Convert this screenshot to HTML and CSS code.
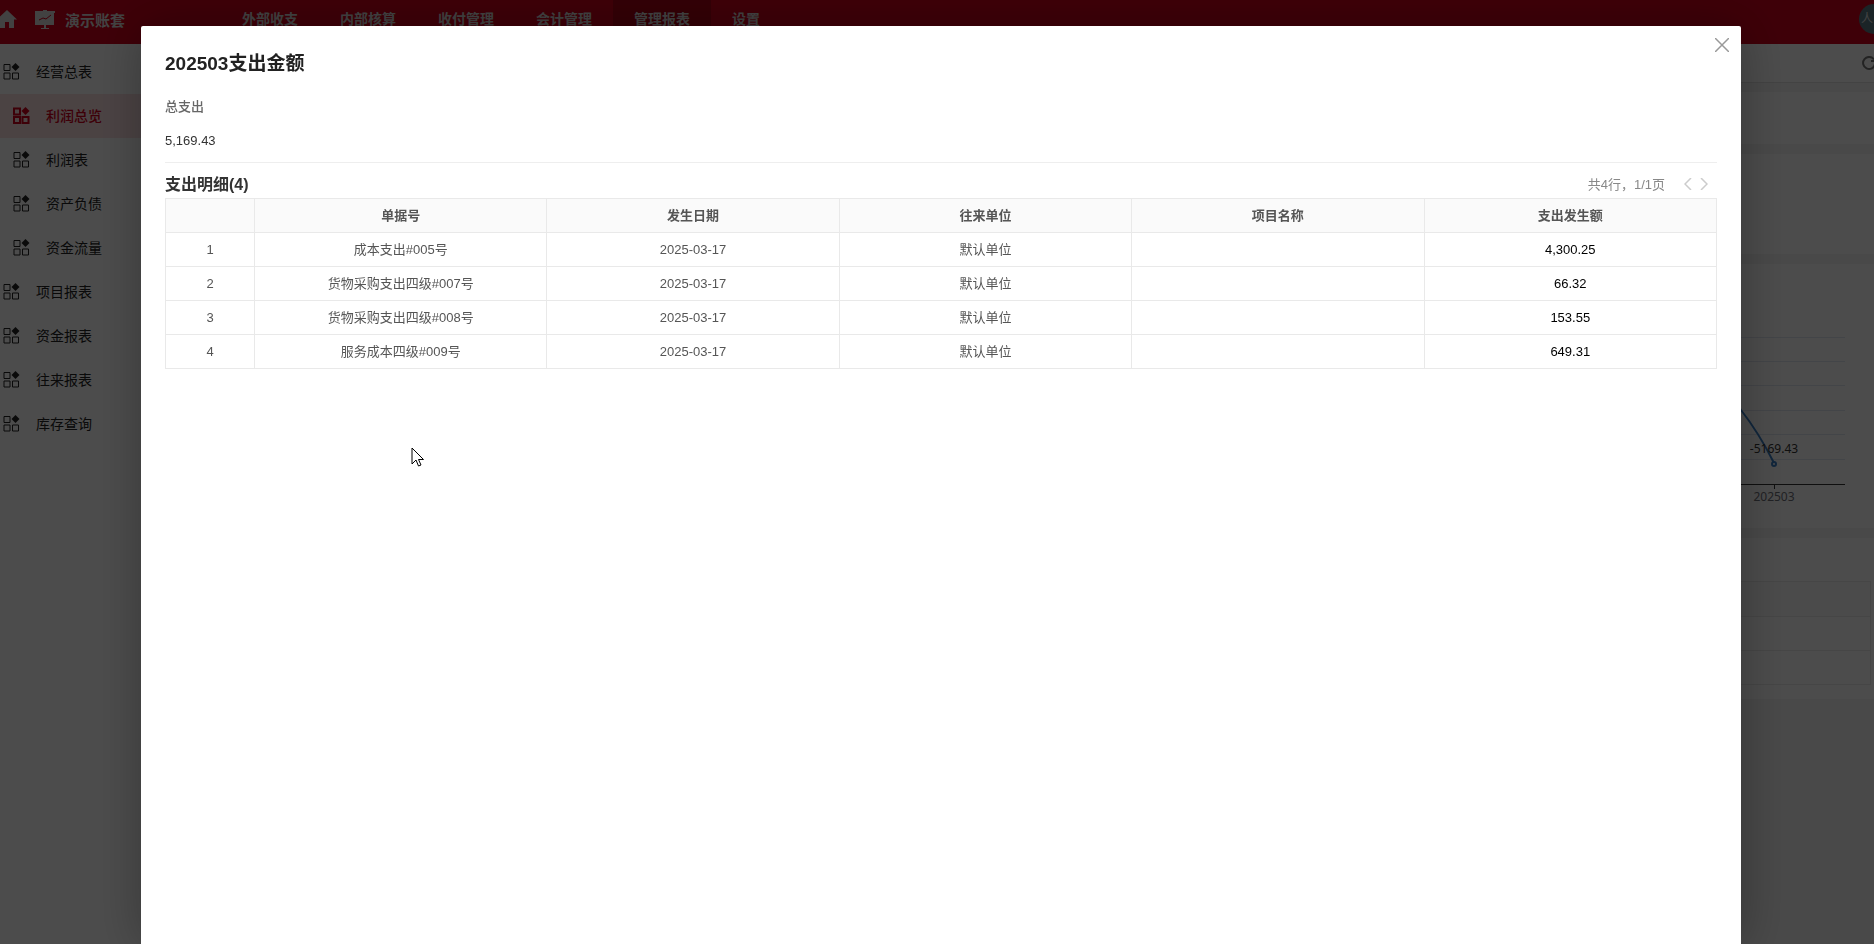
FILE: index.html
```html
<!DOCTYPE html>
<html lang="zh-CN">
<head>
<meta charset="UTF-8">
<title>利润总览</title>
<meta name="viewport" content="width=device-width, initial-scale=1">
<link rel="stylesheet" href="styles.css">
</head>
<body>

<svg class="defs" aria-hidden="true">
  <symbol id="icon-grid" viewBox="0 0 17 17">
    <path d="M1 1.500h6v6h-6zM1 10h6v6h-6zM9.500 10h6v6h-6z" fill="none" stroke="currentColor"/>
    <path d="M12.500 0l4 4-4 4-4-4z" fill="currentColor"/>
  </symbol>
</svg>

<header class="topbar">
  <a class="home" href="#" aria-label="首页">
    <svg width="17" height="18" viewBox="0 0 17 18"><path d="M7 0l10 9.500h-3V18H9v-6H5v6H0V6.500z" fill="currentColor"/></svg>
  </a>
  <a class="account" href="#">
    <svg width="22" height="19" viewBox="0 0 22 19">
      <path d="M1 1h8V0h4v1h8v2h-1v12h-8v3h3v1H7v-1h3v-3H1V3H1z" fill="currentColor"/>
      <path d="M5 10l4-2 3 1 5-4" fill="none" stroke="#d0021b"/>
    </svg>
    <span>演示账套</span>
  </a>
  <nav class="topnav">
    <a href="#">外部收支</a>
    <a href="#">内部核算</a>
    <a href="#">收付管理</a>
    <a href="#">会计管理</a>
    <a href="#" class="active">管理报表</a>
    <a href="#">设置</a>
  </nav>
  <span class="avatar">人</span>
</header>

<div class="layout">
  <nav class="sidebar">
    <a href="#"><svg><use href="#icon-grid"/></svg>经营总表</a>
    <a href="#" class="sub active"><svg><use href="#icon-grid"/></svg>利润总览</a>
    <a href="#" class="sub"><svg><use href="#icon-grid"/></svg>利润表</a>
    <a href="#" class="sub"><svg><use href="#icon-grid"/></svg>资产负债</a>
    <a href="#" class="sub"><svg><use href="#icon-grid"/></svg>资金流量</a>
    <a href="#"><svg><use href="#icon-grid"/></svg>项目报表</a>
    <a href="#"><svg><use href="#icon-grid"/></svg>资金报表</a>
    <a href="#"><svg><use href="#icon-grid"/></svg>往来报表</a>
    <a href="#"><svg><use href="#icon-grid"/></svg>库存查询</a>
  </nav>

  <main class="content">
    <div class="toolbar">
      <button class="refresh" type="button" aria-label="刷新">
        <svg width="14" height="14" viewBox="0 0 14 14"><path d="M12 3.500A6 6 0 1 0 13 8M13 1v4H9" fill="none" stroke="currentColor" stroke-width="2"/></svg>
      </button>
    </div>
    <section class="card filters"></section>
    <section class="card summary"></section>
    <section class="card chart">
      <svg width="160" height="264" viewBox="0 0 160 264">
        <path d="M0 73.500h131M0 97.500h131M0 121.500h131M0 146.500h131M0 170.500h131M0 195.500h131" stroke="#e0e6f1"/>
        <path d="M0 220.500h131M60.500 220v5" stroke="#333" fill="none"/>
        <path d="M-6 96L27 146Q45 169 60 199" stroke="#3a7fc6" stroke-width="2" fill="none"/>
        <circle cx="60" cy="200" r="2" fill="#fff" stroke="#3a7fc6" stroke-width="2"/>
        <text x="60" y="189" class="value">-5169.43</text>
        <text x="60" y="237" class="tick">202503</text>
      </svg>
    </section>
    <section class="card list">
      <div class="lines"><i></i><i></i><i></i></div>
    </section>
  </main>
</div>

<div class="overlay">
  <div class="modal" role="dialog" aria-labelledby="modal-title">
    <button class="close" type="button" aria-label="关闭">
      <svg width="14" height="14" viewBox="0 0 14 14"><path d="M0 0l14 14M14 0L0 14" stroke="currentColor" stroke-width="1.500"/></svg>
    </button>
    <h1 id="modal-title">202503支出金额</h1>
    <dl class="total">
      <dt>总支出</dt>
      <dd>5,169.43</dd>
    </dl>
    <div class="detail-head">
      <h2>支出明细(4)</h2>
      <div class="pager">
        <span>共4行，1/1页</span>
        <button type="button" aria-label="上一页" disabled><svg width="8" height="12" viewBox="0 0 8 12"><path d="M7 0L1 6l6 6"/></svg></button>
        <button type="button" aria-label="下一页" disabled><svg width="8" height="12" viewBox="0 0 8 12"><path d="M1 0l6 6-6 6"/></svg></button>
      </div>
    </div>
    <table class="detail">
      <thead>
        <tr><th class="index"></th><th>单据号</th><th>发生日期</th><th>往来单位</th><th>项目名称</th><th>支出发生额</th></tr>
      </thead>
      <tbody>
        <tr><td>1</td><td>成本支出#005号</td><td>2025-03-17</td><td>默认单位</td><td></td><td class="amount">4,300.25</td></tr>
        <tr><td>2</td><td>货物采购支出四级#007号</td><td>2025-03-17</td><td>默认单位</td><td></td><td class="amount">66.32</td></tr>
        <tr><td>3</td><td>货物采购支出四级#008号</td><td>2025-03-17</td><td>默认单位</td><td></td><td class="amount">153.55</td></tr>
        <tr><td>4</td><td>服务成本四级#009号</td><td>2025-03-17</td><td>默认单位</td><td></td><td class="amount">649.31</td></tr>
      </tbody>
    </table>
  </div>
</div>

<svg class="cursor" width="14" height="21" viewBox="0 0 14 21" aria-hidden="true">
  <path d="M1 1v16l4-4 2.500 6 2.500-1-2.500-5.500H12.500z" fill="#fff" stroke="#000"/>
</svg>

</body>
</html>
```

FILE: styles.css
```css
* { box-sizing: border-box; }
body { margin: 0; height: 100vh; display: flex; flex-direction: column; overflow: hidden; font-family: "Liberation Sans", "Noto Sans CJK SC", sans-serif; font-size: 14px; color: #222; background: #f3f3f3; }
a { color: inherit; text-decoration: none; }
button { padding: 0; border: none; background: none; }
svg { display: block; flex: none; }
h1, h2, dl, dd { margin: 0; }
.defs { position: absolute; width: 0; height: 0; }

/* top bar */
.topbar { display: flex; align-items: center; height: 44px; flex: none; padding-bottom: 6px; background: #d0021b; color: #ddd; overflow: hidden; }
.account { display: flex; align-items: center; gap: 9px; width: 204px; padding-left: 17px; font-size: 15px; font-weight: bold; }
.topnav { display: flex; flex: 1; }
.topnav a { padding: 0 21px; line-height: 44px; font-weight: bold; }
.topnav a.active { background: #ac0015; }
.avatar { width: 30px; height: 30px; margin-right: -15px; padding-left: 2px; border-radius: 50%; background: #5c7a84; font-size: 12px; line-height: 30px; }

/* side menu */
.layout { display: flex; flex: 1; min-height: 0; }
.sidebar { width: 150px; flex: none; padding-top: 6px; background: #fff; }
.sidebar a { display: flex; align-items: center; gap: 16px; height: 44px; padding: 0 0 2px 3px; }
.sidebar a.sub { padding-left: 13px; }
.sidebar a.active { background: #fbdfe2; color: #d0021b; font-weight: 500; }
.sidebar svg { width: 17px; height: 17px; }
.sidebar a.active svg { stroke-width: 2; }

/* page behind the dialog */
.content { flex: 1; display: flex; flex-direction: column; gap: 10px; }
.toolbar { display: flex; align-items: center; justify-content: flex-end; height: 39px; margin-bottom: -1px; background: #fff; border-bottom: 1px solid #e0e0e0; overflow: hidden; }
.refresh { margin-right: -2px; color: #777; }
.card { background: #fff; }
.filters { height: 52px; }
.summary { height: 100px; }
.chart { display: flex; justify-content: flex-end; height: 264px; }
.chart text { font-family: "Noto Sans", sans-serif; font-size: 12px; text-anchor: middle; }
.value { fill: #333; }
.tick { fill: #6e7079; }
.list { padding: 43px 3px 14px 10px; }
.lines { border: 1px solid #eaeaea; }
.lines i { display: block; height: 34px; }
.lines i:first-child { background: #fafafa; }
.lines i + i { border-top: 1px solid #eaeaea; }

/* dialog */
.overlay { position: fixed; inset: 0; display: flex; padding: 26px 133px 0 141px; background: rgba(0, 0, 0, 0.7); }
.modal { position: relative; flex: 1; padding: 25px 24px 0; border-radius: 2px 2px 0 0; background: #fff; box-shadow: 1px 1px 50px rgba(0, 0, 0, 0.3); }
.close { position: absolute; top: 12px; right: 12px; color: #999; }
h1 { font-size: 19px; line-height: 26px; color: #222; }
.total { margin-top: 20px; padding-bottom: 11px; border-bottom: 1px solid #eee; font-size: 13px; line-height: 20px; color: #333; }
.total dt { margin-bottom: 14px; font-weight: 500; color: #666; }
.detail-head { display: flex; align-items: center; justify-content: space-between; height: 35px; padding: 8px 9px 0 0; }
h2 { font-size: 16px; line-height: 24px; color: #333; }
.pager { display: flex; align-items: center; gap: 8px; padding-bottom: 2px; font-size: 13px; color: #888; }
.pager span { margin-right: 11px; }
.pager path { fill: none; stroke: #ccc; stroke-width: 1.5; }
.detail { width: 100%; table-layout: fixed; border-collapse: collapse; font-size: 13px; color: #555; }
.detail th, .detail td { height: 34px; padding: 0; border: 1px solid #e9e9e9; text-align: center; line-height: 20px; }
.detail th { background: #fafafa; }
.detail .index { width: 89px; }
.detail .amount { color: #000; }

.cursor { position: fixed; left: 411px; top: 447px; }
```
